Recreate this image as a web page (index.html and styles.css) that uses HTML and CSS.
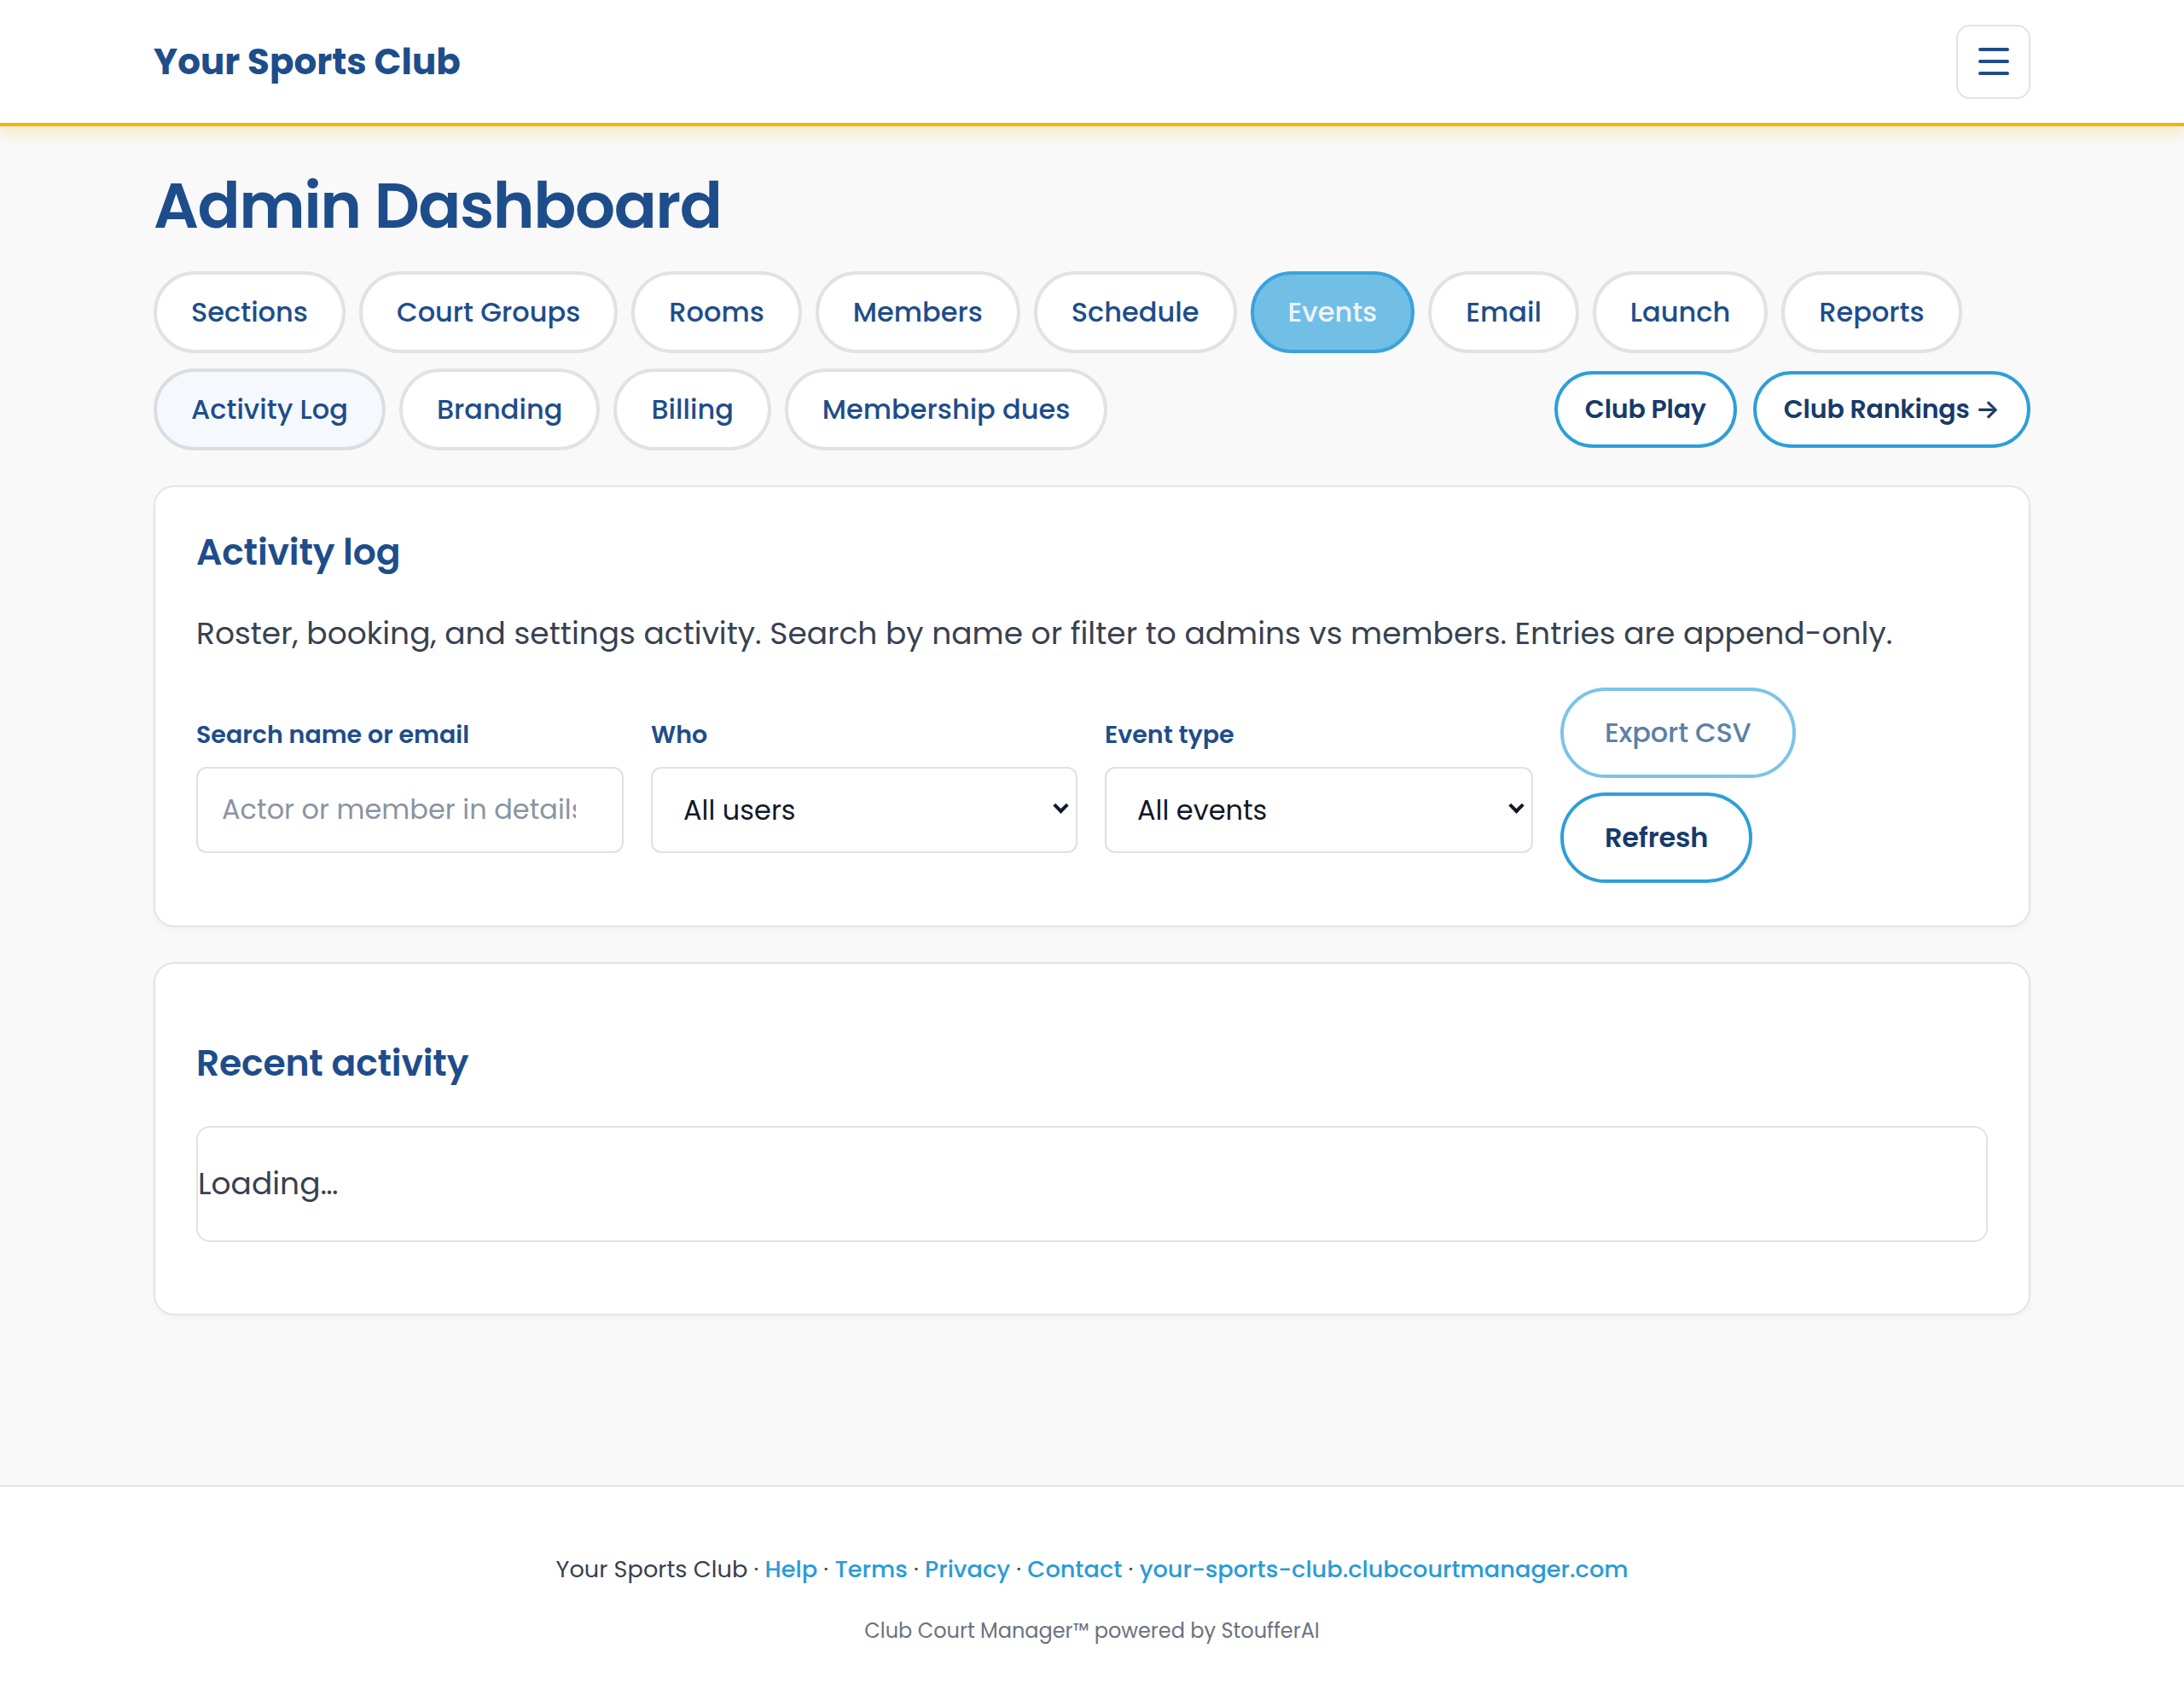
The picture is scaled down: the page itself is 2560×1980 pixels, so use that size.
FILE: index.html
```html
<!DOCTYPE html>
<html lang="en">
  <head>
    <meta charset="utf-8" />
    <meta name="viewport" content="width=device-width, initial-scale=1" />
    <title>Admin Dashboard · Your Sports Club</title>
    <link rel="stylesheet" href="styles.css">
  </head>
  <body>
    <header class="site-header">
      <div class="container header-inner">
        <a class="brand" href="#">Your Sports Club</a>
        <button class="menu-btn" type="button" aria-label="Open menu">
          <svg width="36" height="32" viewBox="0 0 36 32" fill="none" stroke="currentColor" stroke-width="4" stroke-linecap="round">
            <line x1="2" y1="2" x2="34" y2="2" />
            <line x1="2" y1="16" x2="34" y2="16" />
            <line x1="2" y1="30" x2="34" y2="30" />
          </svg>
        </button>
      </div>
    </header>

    <main class="page">
      <div class="container">
        <h1 class="page-title">Admin Dashboard</h1>

        <!-- Admin sections -->
        <nav class="tabs">
          <a class="tab" href="#">Sections</a>
          <a class="tab" href="#">Court Groups</a>
          <a class="tab" href="#">Rooms</a>
          <a class="tab" href="#">Members</a>
          <a class="tab" href="#">Schedule</a>
          <a class="tab tab-active" href="#">Events</a>
          <a class="tab" href="#">Email</a>
          <a class="tab" href="#">Launch</a>
          <a class="tab" href="#">Reports</a>
          <a class="tab tab-current" href="#">Activity Log</a>
          <a class="tab" href="#">Branding</a>
          <a class="tab" href="#">Billing</a>
          <a class="tab" href="#">Membership dues</a>
          <div class="tab-extras">
            <a class="btn-outline" href="#">Club Play</a>
            <a class="btn-outline" href="#">Club Rankings →</a>
          </div>
        </nav>

        <section class="card">
          <h2 class="card-title">Activity log</h2>
          <p class="card-lead">
            Roster, booking, and settings activity. Search by name or filter to admins vs members. Entries are append-only.
          </p>

          <form class="filters">
            <div class="field">
              <label for="q">Search name or email</label>
              <input id="q" class="control control-text" type="text" placeholder="Actor or member in details" />
            </div>
            <div class="field">
              <label for="who">Who</label>
              <div class="select-wrap">
                <select id="who" class="control">
                  <option>All users</option>
                  <option>Admins</option>
                  <option>Members</option>
                </select>
              </div>
            </div>
            <div class="field">
              <label for="type">Event type</label>
              <div class="select-wrap">
                <select id="type" class="control">
                  <option>All events</option>
                  <option>Roster</option>
                  <option>Booking</option>
                  <option>Settings</option>
                </select>
              </div>
            </div>
            <div class="actions">
              <button class="btn-outline btn-disabled" type="button" disabled>Export CSV</button>
              <button class="btn-outline" type="button">Refresh</button>
            </div>
          </form>
        </section>

        <section class="card">
          <h2 class="card-title card-title-spaced">Recent activity</h2>
          <div class="log-box">Loading…</div>
        </section>
      </div>
    </main>

    <footer class="site-footer">
      <p class="footer-links">
        Your Sports Club ·
        <a href="#">Help</a> ·
        <a href="#">Terms</a> ·
        <a href="#">Privacy</a> ·
        <a href="#">Contact</a> ·
        <a href="#">your-sports-club.clubcourtmanager.com</a>
      </p>
      <p class="footer-credit">Club Court Manager™ powered by StoufferAI</p>
    </footer>
  </body>
</html>
```

FILE: styles.css
```css
/* Club admin – activity log page */
* {
  box-sizing: border-box;
}

html,
body {
  margin: 0;
  padding: 0;
}

body {
  min-height: 100vh;
  display: flex;
  flex-direction: column;
  background: #f9f9f9;
  font-family: "Poppins", "Inter", sans-serif;
  color: #374151;
}

a {
  text-decoration: none;
}

.container {
  width: 2200px;
  margin: 0 auto;
}

/* Header */
.site-header {
  background: #fff;
  border-bottom: 4px solid #efb50c;
  box-shadow: 0 6px 22px rgba(239, 181, 12, 0.28);
  position: relative;
  z-index: 1;
}

.header-inner {
  height: 144px;
  display: flex;
  align-items: center;
  justify-content: space-between;
}

.brand {
  font-size: 42px;
  font-weight: 700;
  color: #1e4d8b;
}

.menu-btn {
  width: 87px;
  height: 87px;
  padding: 0;
  display: flex;
  align-items: center;
  justify-content: center;
  background: #fff;
  border: 2px solid #e2e2e2;
  border-radius: 16px;
  color: #1e4d8b;
}

/* Page */
.page {
  flex: 1;
  padding: 48px 0 120px;
}

.page-title {
  margin: 0;
  font-size: 74px;
  line-height: 1.23;
  font-weight: 600;
  letter-spacing: -1.5px;
  color: #1e4d8b;
}

/* Tabs */
.tabs {
  display: flex;
  flex-wrap: wrap;
  align-items: center;
  gap: 18px 16px;
  margin-top: 31px;
}

.tab {
  display: inline-block;
  padding: 20px 40px;
  font-size: 32px;
  line-height: 48px;
  font-weight: 500;
  color: #1e4d8b;
  background: #fff;
  border: 4px solid #e2e2e2;
  border-radius: 999px;
}

.tab-active {
  background: #72bfe6;
  border-color: #3ba3dc;
  color: #eef4fa;
}

.tab-current {
  background: #f5f9fd;
  border-color: #dadee2;
}

.tab-extras {
  margin-left: auto;
  display: flex;
  gap: 19px;
}

.btn-outline {
  display: inline-block;
  padding: 19px 32px;
  font-family: inherit;
  font-size: 30px;
  line-height: 44px;
  font-weight: 600;
  letter-spacing: -0.2px;
  color: #173a6a;
  background: #fff;
  border: 4px solid #2d9fd9;
  border-radius: 999px;
  cursor: pointer;
}

/* Cards */
.card {
  margin-top: 41px;
  padding: 50px 48px 50px;
  background: #fff;
  border: 2px solid #e4e4e4;
  border-radius: 24px;
  box-shadow: 0 3px 10px rgba(0, 0, 0, 0.03);
}

.card-title {
  margin: 0;
  font-size: 42.5px;
  line-height: 1.25;
  font-weight: 600;
  letter-spacing: -0.2px;
  color: #1e4d8b;
}

.card-title-spaced {
  margin-top: 40px;
}

.card-lead {
  margin: 42px 0 0;
  font-size: 36px;
  line-height: 1.5;
  color: #374151;
}

/* Filters */
.filters {
  display: grid;
  grid-template-columns: 501px 500px 502px 1fr;
  gap: 32px;
  align-items: center;
  margin-top: 36px;
}

.field label {
  display: block;
  margin-bottom: 18px;
  font-size: 28.5px;
  line-height: 39px;
  font-weight: 600;
  color: #1e4d8b;
}

.control {
  display: block;
  width: 100%;
  height: 101px;
  padding: 0 28px;
  font-family: inherit;
  font-size: 32px;
  color: #111827;
  background: #fff;
  border: 2px solid #e0e0e0;
  border-radius: 12px;
  outline: none;
}

.control-text {
  padding-right: 54px;
}

.control::placeholder {
  color: #8a94a3;
}

select.control {
  appearance: none;
  -webkit-appearance: none;
  padding-left: 36px;
}

.select-wrap {
  position: relative;
}

.select-wrap::after {
  content: "";
  position: absolute;
  right: 13px;
  top: 39px;
  width: 9px;
  height: 9px;
  border-right: 4px solid #111827;
  border-bottom: 4px solid #111827;
  transform: rotate(45deg);
  pointer-events: none;
}

.actions {
  display: flex;
  flex-wrap: wrap;
  gap: 17px;
}

.filters .btn-outline {
  padding: 24px 48px;
  font-size: 32px;
  line-height: 50px;
}

.btn-disabled {
  color: #5b80a8;
  border-color: #7cc4e8;
  font-weight: 500;
  cursor: default;
}

/* Recent activity */
.log-box {
  margin: 47px 0 34px;
  padding: 39px 0;
  font-size: 36px;
  line-height: 54px;
  color: #374151;
  border: 2px solid #e2e2e2;
  border-radius: 16px;
}

/* Footer */
.site-footer {
  background: #fff;
  border-top: 2px solid #e3e3e3;
  padding: 77px 0 50px;
  text-align: center;
}

.footer-links {
  margin: 0;
  font-size: 27.2px;
  line-height: 40px;
  color: #374151;
}

.footer-links a {
  color: #2a9bd6;
  font-weight: 500;
}

.footer-credit {
  margin: 34px 0 0;
  font-size: 24px;
  line-height: 36px;
  color: #6b7280;
}
```
